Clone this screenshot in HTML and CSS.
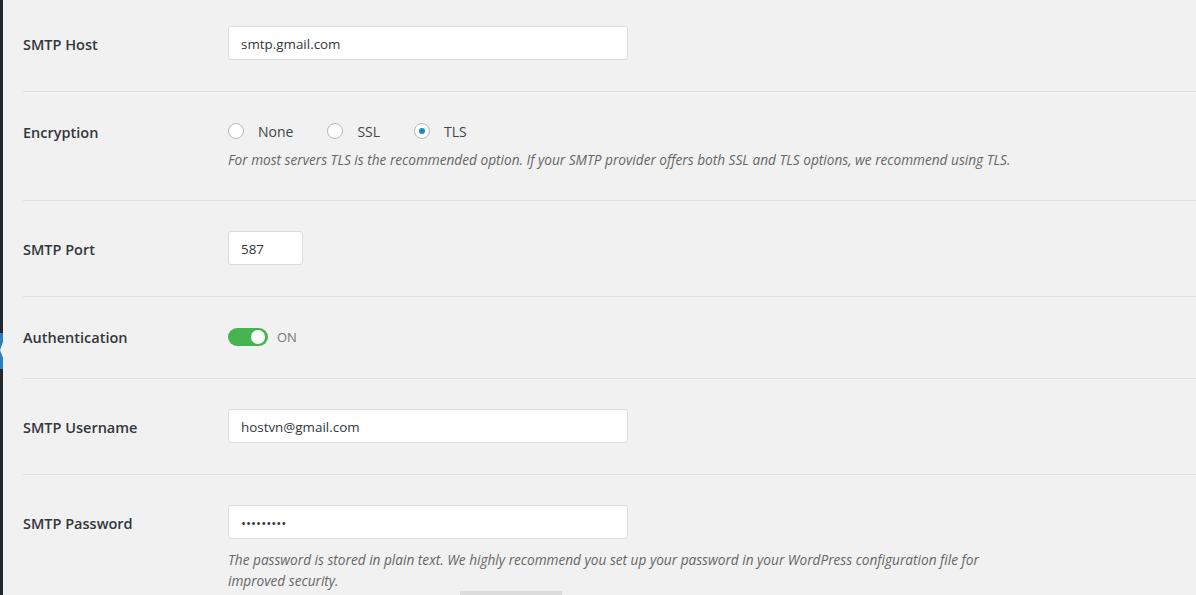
FILE: index.html
```html
<!DOCTYPE html>
<html lang="en">
<head>
    <meta charset="UTF-8">
    <meta name="viewport" content="width=device-width, initial-scale=1.0">
    <title>SMTP Settings</title>
    <link rel="stylesheet" href="styles.css">
</head>
<body>

<div class="layout">
    <!-- Admin menu edge -->
    <div class="admin-menu">
        <div class="menu-current"></div>
    </div>

    <!-- Settings rows -->
    <div class="content">
        <div class="form-table">

            <div class="row">
                <div class="label">SMTP Host</div>
                <div class="field">
                    <input type="text" class="text-input wide" value="smtp.gmail.com">
                </div>
            </div>

            <div class="row">
                <div class="label short">Encryption</div>
                <div class="field">
                    <div class="radios">
                        <label class="radio"><span class="radio-circle"></span>None</label>
                        <label class="radio"><span class="radio-circle"></span>SSL</label>
                        <label class="radio"><span class="radio-circle checked"></span>TLS</label>
                    </div>
                    <p class="description">For most servers TLS is the recommended option. If your SMTP provider offers both SSL and TLS options, we recommend using TLS.</p>
                </div>
            </div>

            <div class="row">
                <div class="label">SMTP Port</div>
                <div class="field">
                    <input type="text" class="text-input small" value="587">
                </div>
            </div>

            <div class="row">
                <div class="label short">Authentication</div>
                <div class="field">
                    <div class="toggle-line">
                        <span class="toggle"><span class="knob"></span></span>
                        <span class="toggle-text">ON</span>
                    </div>
                </div>
            </div>

            <div class="row">
                <div class="label">SMTP Username</div>
                <div class="field">
                    <input type="text" class="text-input wide" value="hostvn@gmail.com">
                </div>
            </div>

            <div class="row last">
                <div class="label">SMTP Password</div>
                <div class="field">
                    <input type="password" class="text-input wide" value="123456789">
                    <p class="description narrow">The password is stored in plain text. We highly recommend you set up your password in your WordPress configuration file for improved security.</p>
                    <div class="next-button"></div>
                </div>
            </div>

        </div>
    </div>
</div>

</body>
</html>
```

FILE: styles.css
```css
body {
    margin: 0;
    background-color: #f1f1f1;
    font-family: "Open Sans", "Noto Sans", sans-serif;
    color: #23282d;
    overflow: hidden;
}

.layout {
    display: flex;
    height: 595px;
}

.admin-menu {
    width: 3px;
    flex-shrink: 0;
    background-color: #23282d;
}

.menu-current {
    position: relative;
    margin-top: 333px;
    height: 36px;
    background-color: #2a7fc0;
}

/* arrow pointing at the page */
.menu-current::after {
    content: "";
    position: absolute;
    right: 0;
    top: 9px;
    border-top: 8px solid transparent;
    border-bottom: 8px solid transparent;
    border-right: 3px solid #f1f1f1;
}

.content {
    flex: 1;
    padding-left: 20px;
}

.form-table {
    margin-top: -4px;
}

.row {
    display: flex;
    align-items: flex-start;
    padding: 30px 0 31px;
    border-bottom: 1px solid #e0e0e0;
}

.row.last {
    border-bottom: none;
    padding-bottom: 0;
}

.label {
    width: 205px;
    flex-shrink: 0;
    padding-top: 4px;
    font-size: 14.5px;
    font-weight: 600;
    line-height: 30px;
    color: #32373c;
}

.label.short {
    padding-top: 2px;
    line-height: 18px;
}

.field {
    flex: 1;
}

.text-input {
    display: block;
    box-sizing: border-box;
    height: 34px;
    padding: 1px 12px 0;
    border: 1px solid #dcdcdc;
    border-radius: 3px;
    background: #fff;
    font-family: inherit;
    font-size: 13.4px;
    color: #32373c;
    outline: none;
}

.text-input.wide {
    width: 400px;
}

.text-input.small {
    width: 75px;
}

.radios {
    display: flex;
    height: 20px;
    align-items: center;
    margin-top: -1px;
}

.radio {
    display: flex;
    align-items: center;
    font-size: 14px;
    color: #444;
    margin-right: 34px;
}

.radio-circle {
    width: 14px;
    height: 14px;
    border: 1px solid #b4b9be;
    border-radius: 50%;
    background: #fff;
    margin-right: 14px;
    position: relative;
}

.radio-circle.checked::after {
    content: "";
    position: absolute;
    left: 4px;
    top: 4px;
    width: 6px;
    height: 6px;
    border-radius: 50%;
    background: #1e8cbe;
}

.description {
    margin: 9px 0 0;
    font-size: 13.65px;
    font-style: italic;
    line-height: 19px;
    color: #666;
}

.description.narrow {
    max-width: 770px;
    margin-top: 10px;
    line-height: 21px;
}

.toggle-line {
    display: flex;
    align-items: center;
    height: 20px;
}

.toggle {
    display: flex;
    justify-content: flex-end;
    align-items: center;
    width: 40px;
    height: 18px;
    box-sizing: border-box;
    padding-right: 3px;
    border-radius: 9px;
    background: #46b450;
}

.knob {
    width: 14px;
    height: 14px;
    border-radius: 50%;
    background: #fff;
}

.toggle-text {
    margin-left: 9px;
    font-size: 13px;
    color: #777;
}

.next-button {
    width: 102px;
    height: 10px;
    margin: 0 0 0 232px;
    background: #dcdcdc;
}
```
